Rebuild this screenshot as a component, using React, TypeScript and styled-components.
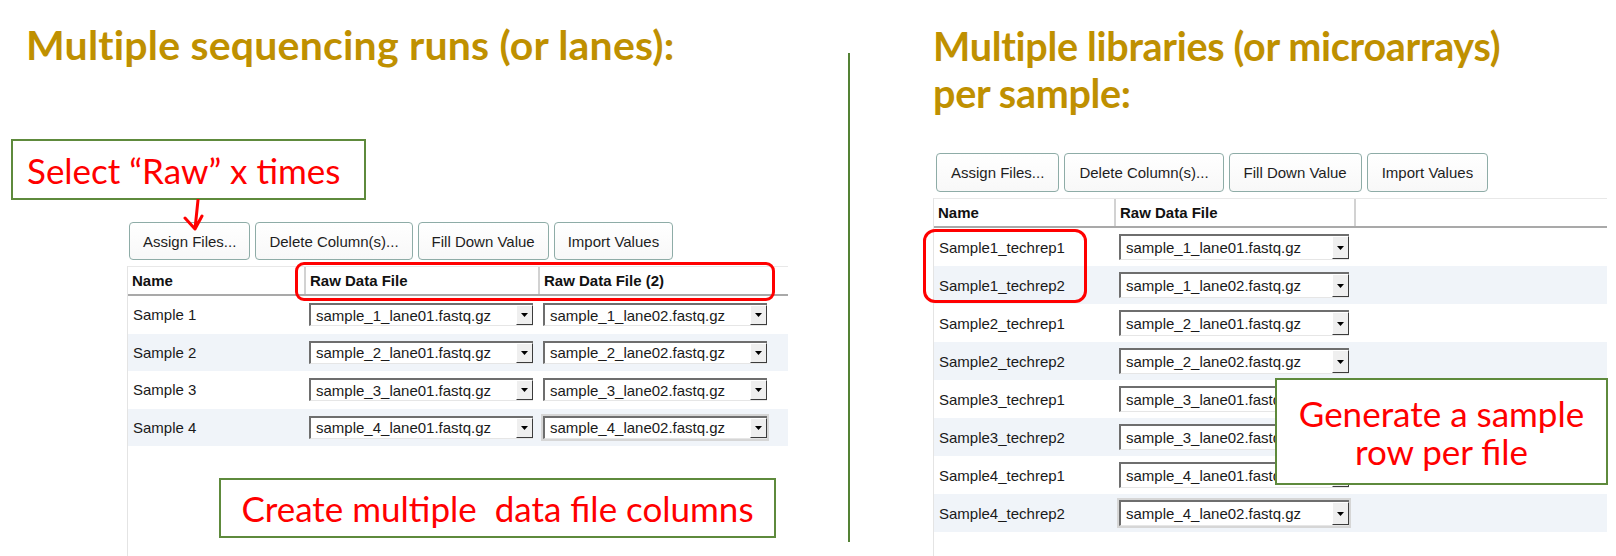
import React from "react";
import styled, { createGlobalStyle } from "styled-components";

const GlobalStyle = createGlobalStyle`
  html, body { margin: 0; padding: 0; background: #fff; }
  body { font-family: "Liberation Sans", Arial, sans-serif; }
  *, *::before, *::after { box-sizing: border-box; }
`;

const Canvas = styled.div`
  position: relative;
  display: flex;
  width: 1616px;
  height: 556px;
  overflow: hidden;
  background: #fff;
`;

const Panel = styled.section<{ $width: number }>`
  position: relative;
  display: flex;
  flex-direction: column;
  flex: none;
  width: ${(p) => p.$width}px;
  padding-top: 22px;
`;

const Title = styled.h2<{ $left: number; $size: number; $lh: number; $ls: number }>`
  margin: 0 0 0 ${(p) => p.$left}px;
  font-family: "Lato", "Open Sans", sans-serif;
  font-weight: 700;
  font-size: ${(p) => p.$size}px;
  line-height: ${(p) => p.$lh}px;
  color: #bf9000;
  letter-spacing: ${(p) => p.$ls}px;
`;

const Divider = styled.div`
  flex: none;
  width: 2px;
  height: 489px;
  margin-top: 53px;
  background: #548235;
`;

const Callout = styled.div<{ $center?: boolean }>`
  display: flex;
  flex-direction: column;
  justify-content: center;
  align-items: ${(p) => (p.$center ? "center" : "flex-start")};
  text-align: ${(p) => (p.$center ? "center" : "left")};
  background: #fff;
  border: 2px solid #5e8a3c;
  color: #ff0000;
  font-family: "Lato", "Open Sans", sans-serif;
  font-weight: 400;
  font-size: 35px;
  line-height: 38px;
  white-space: pre;
`;

const TopCallout = styled(Callout)`
  width: 355px;
  height: 61px;
  margin: 72px 0 0 11px;
  padding-left: 14px;
`;

const OverlayCallout = styled(Callout)<{ $x: number; $y: number; $w: number; $h: number }>`
  position: absolute;
  left: ${(p) => p.$x}px;
  top: ${(p) => p.$y}px;
  width: ${(p) => p.$w}px;
  height: ${(p) => p.$h}px;
  z-index: 3;
`;

const Ring = styled.div<{ $x: number; $y: number; $w: number; $h: number; $r: number }>`
  position: absolute;
  left: ${(p) => p.$x}px;
  top: ${(p) => p.$y}px;
  width: ${(p) => p.$w}px;
  height: ${(p) => p.$h}px;
  border: 3px solid #ff0000;
  border-radius: ${(p) => p.$r}px;
  z-index: 2;
  pointer-events: none;
`;

const ArrowSvg = styled.svg`
  position: absolute;
  left: 180px;
  top: 199px;
  z-index: 2;
`;

const Widget = styled.div<{ $left: number; $top: number; $width: number }>`
  position: relative;
  display: flex;
  flex-direction: column;
  flex: 1;
  width: ${(p) => p.$width}px;
  margin: ${(p) => p.$top}px 0 0 ${(p) => p.$left}px;
`;

const Toolbar = styled.div<{ $h: number; $pad: number }>`
  display: flex;
  gap: 5px;
  height: ${(p) => p.$h}px;
  padding-left: ${(p) => p.$pad}px;
  margin-bottom: 6px;
`;

const ToolButton = styled.button<{ $px: number }>`
  height: 100%;
  padding: 0 ${(p) => p.$px}px;
  border: 1px solid #8eaca7;
  border-radius: 4px;
  background: linear-gradient(#ffffff, #f8f8f8);
  color: #1e1e1e;
  font-family: "Liberation Sans", Arial, sans-serif;
  font-size: 15px;
  white-space: nowrap;
`;

const TableFrame = styled.div`
  flex: 1;
  border-left: 1px solid #e4e4e4;
`;

const HeaderRow = styled.div<{ $cols: string }>`
  display: grid;
  grid-template-columns: ${(p) => p.$cols};
  height: 30px;
  border-top: 1px solid #e8e8e8;
  border-bottom: 2px solid #a9a9a9;
`;

const HeaderCell = styled.div<{ $sep?: boolean }>`
  display: flex;
  align-items: center;
  padding-left: 4px;
  border-left: ${(p) => (p.$sep ? "2px solid #d2d2d2" : "none")};
  font-weight: 700;
  font-size: 15px;
  color: #111;
  white-space: nowrap;
`;

const Row = styled.div<{ $cols: string; $h: number; $alt: boolean }>`
  display: grid;
  grid-template-columns: ${(p) => p.$cols};
  height: ${(p) => p.$h}px;
  background: ${(p) => (p.$alt ? "#f0f4f9" : "#fff")};
`;

const Cell = styled.div`
  display: flex;
  align-items: center;
  padding: 0 5px;
  font-size: 15px;
  color: #1a1a1a;
  white-space: nowrap;
  overflow: hidden;
`;

const SelectBox = styled.div<{ $h: number; $focused?: boolean }>`
  display: flex;
  width: 100%;
  height: ${(p) => p.$h}px;
  background: #fff;
  border-top: 2px solid #6e6e6e;
  border-left: 2px solid #6e6e6e;
  border-bottom: 1px solid #e6e6e6;
  box-shadow: ${(p) => (p.$focused ? "0 0 0 2px #d6d6d6" : "none")};
`;

const SelectText = styled.span`
  flex: 1;
  display: flex;
  align-items: center;
  padding-left: 5px;
  font-size: 15px;
  color: #1a1a1a;
  overflow: hidden;
`;

const SelectArrow = styled.span`
  flex: none;
  width: 17px;
  display: flex;
  align-items: center;
  justify-content: center;
  background: #efefef;
  border-top: 1px solid #fff;
  border-left: 1px solid #fff;
  border-right: 1px solid #3c3c3c;
  border-bottom: 1px solid #3c3c3c;
`;

type Variant = { btnH: number; btnPx: number; btnPad: number; rowH: number; selH: number };

const Select: React.FC<{ value: string; h: number; focused?: boolean }> = ({ value, h, focused }) => (
  <SelectBox $h={h} $focused={focused}>
    <SelectText>{value}</SelectText>
    <SelectArrow>
      <svg width="7" height="4" viewBox="0 0 7 4">
        <path d="M0 0H7L3.5 4Z" fill="#000" />
      </svg>
    </SelectArrow>
  </SelectBox>
);

type RowData = { name: string; files: string[]; focusIdx?: number };

const FileTable: React.FC<{
  cols: string;
  headers: string[];
  rows: RowData[];
  v: Variant;
}> = ({ cols, headers, rows, v }) => (
  <>
    <Toolbar $h={v.btnH} $pad={v.btnPad}>
      {["Assign Files...", "Delete Column(s)...", "Fill Down Value", "Import Values"].map((t) => (
        <ToolButton key={t} $px={v.btnPx}>
          {t}
        </ToolButton>
      ))}
    </Toolbar>
    <TableFrame>
      <HeaderRow $cols={cols}>
        {headers.map((h, i) => (
          <HeaderCell key={i} $sep={i > 0}>
            {h}
          </HeaderCell>
        ))}
      </HeaderRow>
      {rows.map((r, i) => (
        <Row key={r.name} $cols={cols} $h={v.rowH} $alt={i % 2 === 1}>
          <Cell>{r.name}</Cell>
          {r.files.map((f, j) => (
            <Cell key={f}>
              <Select value={f} h={v.selH} focused={r.focusIdx === j} />
            </Cell>
          ))}
          <Cell />
        </Row>
      ))}
    </TableFrame>
  </>
);

const leftRows: RowData[] = [1, 2, 3, 4].map((n) => ({
  name: `Sample ${n}`,
  files: [`sample_${n}_lane01.fastq.gz`, `sample_${n}_lane02.fastq.gz`],
  focusIdx: n === 4 ? 1 : undefined,
}));

const rightRows: RowData[] = [1, 2, 3, 4].flatMap((n) =>
  [1, 2].map((r) => ({
    name: `Sample${n}_techrep${r}`,
    files: [`sample_${n}_lane0${r}.fastq.gz`],
    focusIdx: n === 4 && r === 2 ? 0 : undefined,
  }))
);

export default function App() {
  return (
    <>
      <GlobalStyle />
      <Canvas>
        <Panel $width={848}>
          <Title $left={26} $size={41} $lh={45} $ls={0.2}>
            Multiple sequencing runs (or lanes):
          </Title>
          <TopCallout>Select “Raw” x times</TopCallout>
          <ArrowSvg width="26" height="34" viewBox="0 0 26 34">
            <path
              d="M18 1 L15 30 M5 19 L15 30 L22 17"
              fill="none"
              stroke="#ff0000"
              strokeWidth="3"
              strokeLinecap="round"
              strokeLinejoin="round"
            />
          </ArrowSvg>
          <Widget $left={127} $top={22} $width={661}>
            <FileTable
              cols="176px 234px 234px 1fr"
              headers={["Name", "Raw Data File", "Raw Data File (2)", ""]}
              rows={leftRows}
              v={{ btnH: 38, btnPx: 13, btnPad: 2, rowH: 37.5, selH: 23 }}
            />
            <Ring $x={168} $y={40} $w={480} $h={39} $r={9} />
            <OverlayCallout $center $x={92} $y={256} $w={557} $h={60}>
              {"Create multiple  data file columns"}
            </OverlayCallout>
          </Widget>
        </Panel>
        <Divider />
        <Panel $width={766}>
          <Title $left={83} $size={39.5} $lh={47} $ls={-0.3}>
            Multiple libraries (or microarrays)
            <br />
            per sample:
          </Title>
          <Widget $left={83} $top={37} $width={674}>
            <FileTable
              cols="180px 240px 1fr"
              headers={["Name", "Raw Data File", ""]}
              rows={rightRows}
              v={{ btnH: 39, btnPx: 14, btnPad: 3, rowH: 38, selH: 26 }}
            />
            <Ring $x={-10} $y={76} $w={164} $h={74} $r={12} />
            <OverlayCallout $center $x={342} $y={225} $w={333} $h={107}>
              {"Generate a sample\nrow per file"}
            </OverlayCallout>
          </Widget>
        </Panel>
      </Canvas>
    </>
  );
}
